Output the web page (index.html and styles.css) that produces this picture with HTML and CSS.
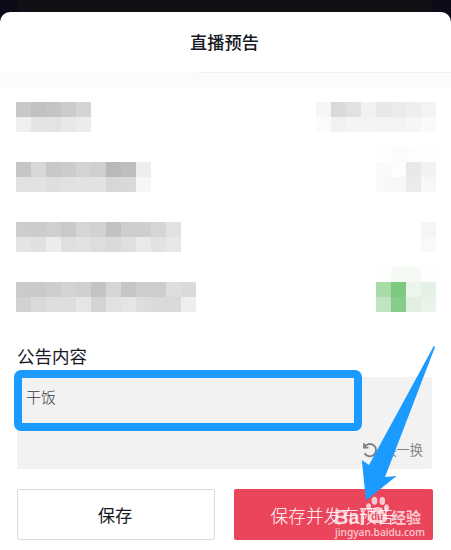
FILE: index.html
```html
<!DOCTYPE html>
<html lang="zh-CN">
<head>
<meta charset="utf-8">
<title>直播预告</title>
<link rel="stylesheet" href="styles.css">
</head>
<body>
<main class="sheet">
  <header class="header"><h1 class="title">直播预告</h1></header>
  <div class="band"></div>
  <section class="rows" id="rows"></section>
  <section class="notice">
    <h2 class="label">公告内容</h2>
    <div class="field">
      <p class="value">干饭</p>
      <div class="swap">
        <svg class="swap-icon" viewBox="0 0 16 16"><path d="M2 1.2V5.6H6.4M2.3 5.4A6.2 6.2 0 1 1 2.5 11.3" fill="none" stroke="#808080" stroke-width="1.9"/></svg>
        <span>换一换</span>
      </div>
      <div class="highlight"></div>
    </div>
  </section>
  <footer class="actions">
    <button class="btn">保存</button>
    <button class="btn primary">保存并发布预告</button>
  </footer>
</main>
<div class="watermark">
  <svg class="paw" viewBox="0 0 24 28"><g fill="#fff"><ellipse cx="9.500" cy="4.800" rx="2.900" ry="4"/><ellipse cx="17.300" cy="5" rx="2.800" ry="4"/><ellipse cx="3.600" cy="11" rx="2.500" ry="3.700"/><ellipse cx="21.500" cy="12" rx="2.400" ry="3.700"/><path d="M12.500 11C9 11 8 15 5 18C1 22 4 27 8 27H17.500C22 27 24 22 20.500 18C18 15 16.500 11 12.500 11Z"/></g></svg>
  <div class="brand"><b class="bai">Bai</b><b class="du">du</b><span class="jy">经验</span></div>
  <div class="site">jingyan.baidu.com</div>
</div>
<svg class="arrow" viewBox="0 0 76 156"><path d="M73.800 1L75 2L39.300 95L25 132L36.500 131L6 155.500L1.800 115L9 120Z" fill="#1b9aff"/></svg>
<script src="rows.js"></script>
</body>
</html>
```
FILE: styles.css
```css
* { box-sizing: border-box; }
body {
  margin: 0;
  height: 550px;
  padding-top: 12px;
  overflow: hidden;
  position: relative;
  background: linear-gradient(90deg, #0d0b19 0 18px, #101114 19px 431px, #0d0b19 432px);
  font-family: "Noto Sans CJK SC", sans-serif;
  color: #161823;
}
.sheet { height: 538px; background: #fff; border-radius: 10px 10px 0 0; }
.header { height: 60px; display: flex; align-items: center; justify-content: center; padding-right: 2px; }
.title { margin: 0; font-size: 17.200px; line-height: 24px; font-weight: 500; }
.band { height: 15px; background: linear-gradient(#f2f2f2, #f2f2f2) right top / 252px 1px no-repeat #fbfbfb; }
.rows { height: 240px; padding: 0 15px 0 16px; margin-top: -15px; }
.row { height: 60px; display: flex; justify-content: space-between; align-items: flex-end; }
.mosaic { display: grid; grid-template-columns: repeat(var(--cols), 15px); grid-auto-rows: 15px; }
.notice { padding: 32px 19px 0 17px; }
.label { margin: 0; font-size: 17.500px; line-height: 24px; font-weight: 400; }
.field {
  position: relative;
  height: 92px;
  margin-top: 9px;
  padding: 9px 9px 8px;
  display: flex;
  flex-direction: column;
  justify-content: space-between;
  background: #f2f2f2;
  border-radius: 2px;
}
.value { margin: 0; font-size: 15px; line-height: 22px; font-weight: 300; color: #363741; }
.swap { display: flex; align-items: center; justify-content: flex-end; gap: 5px; font-size: 13.200px; line-height: 22px; color: #858585; }
.swap-icon { width: 16px; height: 16px; }
.highlight { position: absolute; left: -3px; top: -7px; width: 348px; height: 61px; border: 8px solid #1b9aff; border-radius: 7px; }
.actions { display: grid; grid-template-columns: 198px 199px; gap: 19px; padding: 20px 18px 0 17px; }
.btn { height: 51px; padding: 0 2px 0 0; border: 1px solid #dadada; border-radius: 2px; background: #fff; font: 400 17.300px/24px "Noto Sans CJK SC", sans-serif; color: #161823; }
.primary { border: 0; background: #ea455b; color: #fff; font-size: 17.700px; font-weight: 300; white-space: nowrap; }
.watermark { position: absolute; left: 334px; top: 496px; width: 92px; height: 46px; color: #fff; opacity: .72; }
.paw { position: absolute; left: 31px; top: 0; width: 24px; height: 28px; }
.brand { position: absolute; left: 0; top: 10px; display: flex; align-items: center; height: 22px; }
.bai { font: bold 20px/22px "Liberation Sans", sans-serif; width: 34px; }
.du { font: bold 10px/22px "Liberation Sans", sans-serif; width: 23px; padding-left: 3px; color: #ea455b; }
.jy { font-size: 15px; line-height: 22px; font-weight: 700; white-space: nowrap; }
.site { position: absolute; left: 1px; top: 29px; font: 500 10.200px/14px "Noto Sans", sans-serif; white-space: nowrap; }
.arrow { position: absolute; left: 360px; top: 345px; width: 76px; height: 156px; }
```
FILE: rows.js
```js
// Each row holds a left and a right mosaic, as lines of hex colours.
const rows = [
  [["c8c8ca c1c1c3 c4c4c6 cccccc d4d4d6", "efefef e4e4e4 e3e3e3 e8e8e8 ececec"],
   ["f6f6f6 dadada e1e1e1 f1f1f1 e8e8e8 ebebeb eeeeee f3f3f3", "fbfbfb f1f1f1 f4f4f4 f4f4f4 f3f3f3 f3f3f3 f6f6f6 fafafa"]],
  [["c6c6c6 d8d8d8 c8c8c8 cccccc d3d3d3 cfcfcf b9b9bb bebec0 eeeeee", "e2e2e2 e2e2e2 dedede e1e1e1 e2e2e2 e2e2e2 d7d7d7 d9d9d9 f6f6f6"],
   ["fefefe fbfbfb fdfdfd fefefe", "fafafa fdfdfd e8e8e8 f2f2f2", "f9f9f9 f7f7f7 ebebeb f7f7f7"]],
  [["cdcdcf cccccc cfcfcf c9c9cb d5d5d5 d1d1d1 c2c2c2 cecece cecece d6d6d6 e1e1e1", "e4e4e4 e0e0e0 ececec dfdfdf e1e1e1 dddddd dadada dfdfdf e9e9e9 e2e2e2 e7e7e7"],
   ["f5f5f5", "f9f9f9"]],
  [["cbcbcd cacaca cdcdcf d3d3d3 d0d0d2 c4c4c6 d6d6d6 c6c6c6 cdcdcf cdcdcf dedede dadada", "d1d1d3 dadada dddddd dddddd e5e5e5 d3d3d6 e1e1e1 e5e5e5 dddddd dadada dadada eeeeee"],
   ["fefefe f5faf5 f5faf5 fefefe", "a7dca9 7bca7f ebf5ed e6f1e6", "bfe4c1 85cd89 e1efe3 e9f3ea"]]
];
document.getElementById("rows").innerHTML = rows.map(row =>
  `<div class="row">${row.map(lines => {
    const cells = lines.map(line => line.split(" "));
    return `<div class="mosaic" style="--cols:${cells[0].length}">${cells.flat().map(c => `<i style="background:#${c}"></i>`).join("")}</div>`;
  }).join("")}</div>`).join("");
```
